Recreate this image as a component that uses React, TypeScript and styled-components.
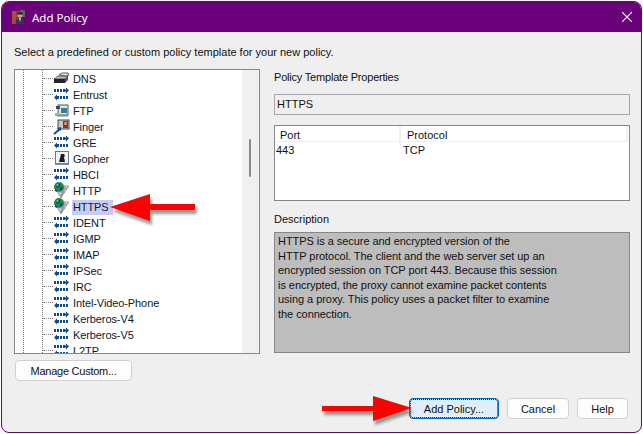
import React from "react";
import styled, { createGlobalStyle } from "styled-components";

const Global = createGlobalStyle`
  html, body { margin: 0; padding: 0; background: #fff; }
  body { font-family: "Liberation Sans", Arial, sans-serif; font-size: 11px; color: #111; }
`;

const Stage = styled.div`
  position: relative;
  width: 643px;
  height: 434px;
  overflow: hidden;
  padding: 1px;
  box-sizing: border-box;
`;
const Dialog = styled.div`
  width: 641px;
  height: 432px;
  box-sizing: border-box;
  border: 1px solid #6b007b;
  border-radius: 8px;
  background: #efefef;
  overflow: hidden;
  display: flex;
  flex-direction: column;
`;
const TitleBar = styled.div`
  height: 30px;
  flex: none;
  background: #6b007b;
  color: #fff;
  display: flex;
  align-items: center;
  padding: 0 9px 0 10px;
  gap: 5px;
  font-family: "Noto Sans", sans-serif;
  font-size: 11.5px;
`;
const TitleText = styled.span`
  flex: 1;
`;
const Body = styled.div`
  flex: 1;
  display: flex;
  flex-direction: column;
  padding: 14px 11px 0 12px;
`;
const Instruction = styled.div`
  height: 13px;
  line-height: 13px;
`;
const Main = styled.div`
  display: flex;
  gap: 14px;
  margin-top: 10px;
`;
const LeftColumn = styled.div`
  width: 246px;
  flex: none;
`;
const Tree = styled.div`
  height: 285px;
  box-sizing: border-box;
  border: 1px solid #85858d;
  background: #fff;
  display: flex;
  overflow: hidden;
`;
const TreeList = styled.div`
  flex: 1;
  padding-top: 1px;
  background-image:
    repeating-linear-gradient(to bottom, #7c7c7c 0 1px, transparent 1px 2px),
    repeating-linear-gradient(to bottom, #7c7c7c 0 1px, transparent 1px 2px);
  background-size: 1px 100%, 1px 100%;
  background-position: 8px 0, 27px 0;
  background-repeat: no-repeat;
`;
const TreeRow = styled.div`
  height: 16px;
  display: flex;
  align-items: center;
  padding-left: 28px;
`;
const Connector = styled.span`
  width: 10px;
  height: 0;
  flex: none;
  border-top: 1px dotted #7c7c7c;
  margin-top: -1px;
`;
const IconSlot = styled.span`
  width: 19px;
  height: 16px;
  flex: none;
  display: block;
  svg { display: block; overflow: visible; }
`;
const RowLabel = styled.span<{ $selected?: boolean }>`
  padding: 0 4px 0 1px;
  height: 15px;
  line-height: 15px;
  letter-spacing: -0.1px;
  color: #10182a;
  background: ${(p) => (p.$selected ? "#c6ccf5" : "transparent")};
`;
const ScrollTrack = styled.div`
  width: 17px;
  box-sizing: border-box;
  flex: none;
  background: #f0f0f0;
  display: flex;
  justify-content: center;
  padding: 69px 2px 0 0;
`;
const ScrollThumb = styled.div`
  width: 2px;
  height: 38px;
  background: #8a8a8a;
  border-radius: 1px;
`;
const Button = styled.button<{ $default?: boolean; $width: number; $tight?: boolean }>`
  width: ${(p) => p.$width}px;
  height: 21px;
  box-sizing: border-box;
  padding: 0;
  font: 11px "Liberation Sans", Arial, sans-serif;
  letter-spacing: ${(p) => (p.$tight ? "-0.25px" : "0")};
  color: #111;
  border-radius: 4px;
  background: ${(p) => (p.$default ? "#e0eef9" : "#fdfdfd")};
  border: 1px solid ${(p) => (p.$default ? "#0067c0" : "#d0d0d0")};
  outline: ${(p) => (p.$default ? "1px dotted #111" : "none")};
  outline-offset: ${(p) => (p.$default ? "-2px" : "0")};
`;
const ManageRow = styled.div`
  margin-top: 6px;
  padding-left: 1px;
`;
const RightColumn = styled.div`
  flex: 1;
  display: flex;
  flex-direction: column;
`;
const SectionLabel = styled.div`
  height: 13px;
  line-height: 13px;
  margin-top: 2px;
  letter-spacing: -0.2px;
`;
const NameField = styled.div`
  margin-top: 10px;
  height: 21px;
  box-sizing: border-box;
  border: 1px solid #a5a5ad;
  line-height: 19px;
  padding-left: 2px;
`;
const TableBox = styled.div`
  margin-top: 10px;
  height: 76px;
  box-sizing: border-box;
  border: 1px solid #85858d;
  background: #fff;
`;
const HeaderRow = styled.div`
  display: grid;
  grid-template-columns: 126px 1fr;
  height: 16px;
  border-bottom: 1px solid #f0f0f0;
  box-sizing: border-box;
  margin-right: 1px;
  border-right: 2px solid #f0f0f0;
`;
const HeaderCell = styled.div<{ $first?: boolean }>`
  line-height: 19px;
  padding-left: ${(p) => (p.$first ? "5px" : "6px")};
  border-right: ${(p) => (p.$first ? "2px solid #f0f0f0" : "none")};
`;
const DataRow = styled.div`
  display: grid;
  grid-template-columns: 127px 1fr;
  height: 15px;
  line-height: 17px;
  padding-left: 1px;
`;
const DescLabel = styled(SectionLabel)`
  margin-top: 12px;
  letter-spacing: 0;
`;
const DescriptionBox = styled.div`
  margin-top: 6px;
  height: 121px;
  box-sizing: border-box;
  border: 1px solid #85858d;
  background: #bdbdbd;
  padding: 1px 0 0 3px;
  line-height: 14.6px;
  letter-spacing: -0.05px;
`;
const DescLine = styled.div`
  white-space: nowrap;
`;
const Footer = styled.div`
  display: flex;
  justify-content: flex-end;
  gap: 8px;
  margin-bottom: 13px;
  padding-right: 13px;
`;
const ArrowMark = styled.svg<{ $left: number; $top: number }>`
  position: absolute;
  left: ${(p) => p.$left}px;
  top: ${(p) => p.$top}px;
`;
const CloseMark = styled.svg`
  flex: none;
`;

const Service = () => (
  <svg width="18" height="16" viewBox="0 0 18 16">
    <g fill="#0b4b9c">
      <rect x="1" y="2" width="2" height="3" />
      <rect x="4" y="2" width="2" height="3" />
      <rect x="7" y="2" width="2" height="3" />
      <rect x="10" y="2" width="2" height="3" />
      <path d="M12 2.5h1V0.5l3 3-3 3V4.5h-1z" />
      <rect x="13" y="9" width="2" height="3" />
      <rect x="10" y="9" width="2" height="3" />
      <rect x="7" y="9" width="2" height="3" />
      <rect x="4" y="9" width="2" height="3" />
      <path d="M4 9.5V7.5l-3 3 3 3V11.5z" />
    </g>
  </svg>
);
const Dns = () => (
  <svg width="18" height="16" viewBox="0 0 18 16">
    <path d="M1 8l4-3h10l-3 3z" fill="#b8b8b8" stroke="#222" strokeWidth="0.6" />
    <path d="M1 8h11v4H1z" fill="#222" />
    <path d="M12 8l3-3v4l-3 3z" fill="#555" />
    <path d="M6 4l3-2h6l1 2-3 1z" fill="#e8e8e8" stroke="#333" strokeWidth="0.8" />
  </svg>
);
const Ftp = () => (
  <svg width="18" height="16" viewBox="0 0 18 16">
    <rect x="5" y="2" width="10" height="10" fill="#dfe7ea" stroke="#555" />
    <rect x="8" y="5" width="6" height="5" fill="#2f7f96" />
    <path d="M3 3h4v3H3z" fill="#284a78" />
    <path d="M2 10h5v3H2z" fill="#9fb0ba" />
    <path d="M4 13h11" stroke="#777" />
  </svg>
);
const Finger = () => (
  <svg width="18" height="16" viewBox="0 0 18 16">
    <rect x="5" y="1" width="11" height="9" fill="#c9c9c9" stroke="#444" />
    <rect x="10" y="2" width="5" height="7" fill="#7a3a22" />
    <rect x="11.5" y="3" width="2" height="3" fill="#e8b48e" />
    <path d="M1 15l6-5" stroke="#0b4b9c" strokeWidth="2" />
    <path d="M8 8v4l-4-3z" fill="#0b4b9c" />
  </svg>
);
const Gopher = () => (
  <svg width="18" height="16" viewBox="0 0 18 16">
    <rect x="2.5" y="0.5" width="13" height="12" fill="#f3f3f3" stroke="#5f7d9c" />
    <path d="M6 11l2-8h3l1 2-1 1 1 5z" fill="#1b1b1b" />
    <path d="M2 13.5h14" stroke="#7f93a8" />
  </svg>
);
const Globe = () => (
  <svg width="18" height="16" viewBox="0 0 18 16">
    <path d="M8 14.5L16 3H6L3 8z" fill="#d6d6d6" />
    <g stroke="#7d7d7d" strokeWidth="0.7" fill="none">
      <path d="M8 14.5L16 3M8 14.5L12.5 3M8 14.5L4 8M8 14.5L10 8M16 3H9M14 6H5M12 9H6M10 12H7" />
    </g>
    <circle cx="6" cy="4" r="5" fill="#1f8a3a" />
    <path d="M3 2q2-2 4-1l0 2-3 2zM8 4l2 1-2 3-1-2zM2 6l2 1v2l-2-1z" fill="#0c3f8e" />
    <circle cx="4.5" cy="2" r="1.1" fill="#86d892" />
  </svg>
);

const rows: [string, React.FC][] = [
  ["DNS", Dns],
  ["Entrust", Service],
  ["FTP", Ftp],
  ["Finger", Finger],
  ["GRE", Service],
  ["Gopher", Gopher],
  ["HBCI", Service],
  ["HTTP", Globe],
  ["HTTPS", Globe],
  ["IDENT", Service],
  ["IGMP", Service],
  ["IMAP", Service],
  ["IPSec", Service],
  ["IRC", Service],
  ["Intel-Video-Phone", Service],
  ["Kerberos-V4", Service],
  ["Kerberos-V5", Service],
  ["L2TP", Service],
];

const description = [
  "HTTPS is a secure and encrypted version of the",
  "HTTP protocol. The client and the web server set up an",
  "encrypted session on TCP port 443. Because this session",
  "is encrypted, the proxy cannot examine packet contents",
  "using a proxy. This policy uses a packet filter to examine",
  "the connection.",
];

const AppLogo = () => (
  <svg width="15" height="15" viewBox="0 0 15 15">
    <rect x="0" y="1" width="8" height="13" fill="#8e3a3a" />
    <rect x="0" y="1" width="4" height="13" fill="#a94a44" />
    <rect x="8" y="0" width="5" height="7" fill="#6d5a5a" />
    <circle cx="8" cy="5" r="2.6" fill="#c9a08a" />
    <path d="M5 3.5q3-3 6 0v1H5z" fill="#20222e" />
    <path d="M3.5 14q0-6 4.5-6t4.5 6z" fill="#2b3a55" />
    <path d="M7 8h2l-1 4z" fill="#e8e8e8" />
  </svg>
);

const Arrow = ({ left, top, flip }: { left: number; top: number; flip?: boolean }) => (
  <ArrowMark $left={left} $top={top} width="100" height="42" viewBox="0 0 100 42">
    <defs>
      <filter id={flip ? "s2" : "s1"} x="-20%" y="-30%" width="150%" height="170%">
        <feGaussianBlur stdDeviation="1.6" />
      </filter>
    </defs>
    {flip ? (
      <>
        <path d="M1 10h51V0l39 12-39 13V15H1z" fill="#555" opacity="0.6" filter="url(#s2)" transform="translate(2 4)" />
        <path d="M1 10h51V0l39 12-39 13V15H1z" fill="#fe0000" />
      </>
    ) : (
      <>
        <path d="M1 14L41 1v10h45v6H41v11z" fill="#555" opacity="0.6" filter="url(#s1)" transform="translate(2 4)" />
        <path d="M1 14L41 1v10h45v6H41v11z" fill="#fe0000" />
      </>
    )}
  </ArrowMark>
);

export default function App() {
  return (
    <Stage>
      <Global />
      <Dialog>
        <TitleBar>
          <AppLogo />
          <TitleText>Add Policy</TitleText>
          <CloseMark width="10" height="10" viewBox="0 0 10 10">
            <path d="M0 0l10 10M10 0L0 10" stroke="#fff" strokeWidth="1.1" />
          </CloseMark>
        </TitleBar>
        <Body>
          <Instruction>Select a predefined or custom policy template for your new policy.</Instruction>
          <Main>
            <LeftColumn>
              <Tree>
                <TreeList>
                  {rows.map(([name, Icon]) => (
                    <TreeRow key={name}>
                      <Connector />
                      <IconSlot>
                        <Icon />
                      </IconSlot>
                      <RowLabel $selected={name === "HTTPS"}>{name}</RowLabel>
                    </TreeRow>
                  ))}
                </TreeList>
                <ScrollTrack>
                  <ScrollThumb />
                </ScrollTrack>
              </Tree>
              <ManageRow>
                <Button $width={117} $tight>Manage Custom...</Button>
              </ManageRow>
            </LeftColumn>
            <RightColumn>
              <SectionLabel>Policy Template Properties</SectionLabel>
              <NameField>HTTPS</NameField>
              <TableBox>
                <HeaderRow>
                  <HeaderCell $first>Port</HeaderCell>
                  <HeaderCell>Protocol</HeaderCell>
                </HeaderRow>
                <DataRow>
                  <span>443</span>
                  <span>TCP</span>
                </DataRow>
              </TableBox>
              <DescLabel>Description</DescLabel>
              <DescriptionBox>
                {description.map((line) => (
                  <DescLine key={line}>{line}</DescLine>
                ))}
              </DescriptionBox>
            </RightColumn>
          </Main>
        </Body>
        <Footer>
          <Button $default $width={90}>Add Policy...</Button>
          <Button $width={62}>Cancel</Button>
          <Button $width={51}>Help</Button>
        </Footer>
      </Dialog>
      <Arrow left={109} top={193} />
      <Arrow left={321} top={396} flip />
    </Stage>
  );
}
